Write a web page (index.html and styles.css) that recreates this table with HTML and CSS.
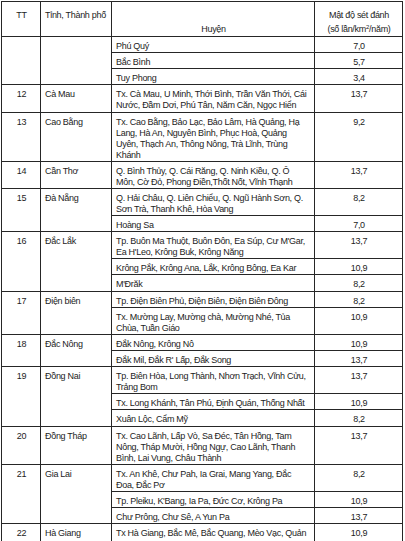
FILE: index.html
```html
<!DOCTYPE html>
<html lang="vi">
<head>
<meta charset="utf-8">
<title>Mật độ sét đánh</title>
<link rel="stylesheet" href="styles.css">
</head>
<body>
<table class="density">
  <colgroup>
    <col class="c-tt">
    <col class="c-prov">
    <col class="c-dist">
    <col class="c-val">
  </colgroup>
  <thead>
    <tr>
      <th class="h-tt">TT</th>
      <th class="h-prov">Tỉnh, Thành phố</th>
      <th class="h-dist">Huyện</th>
      <th class="h-val">Mật độ sét đánh<br>(số lần/km<sup>2</sup>/năm)</th>
    </tr>
  </thead>
  <tbody>
    <tr><td class="tt" rowspan="3"></td><td class="prov" rowspan="3"></td><td class="dist">Phú Quý</td><td class="val">7,0</td></tr>
    <tr><td class="dist">Bắc Bình</td><td class="val">5,7</td></tr>
    <tr><td class="dist">Tuy Phong</td><td class="val">3,4</td></tr>

    <tr><td class="tt">12</td><td class="prov">Cà Mau</td><td class="dist">Tx. Cà Mau, U Minh, Thới Bình, Trần Văn Thới, Cái<br>Nước, Đầm Dơi, Phú Tân, Năm Căn, Ngọc Hiển</td><td class="val">13,7</td></tr>

    <tr><td class="tt">13</td><td class="prov">Cao Bằng</td><td class="dist">Tx. Cao Bằng, Bảo Lạc, Bảo Lâm, Hà Quảng, Hạ<br>Lang, Hà An, Nguyên Bình, Phục Hoà, Quảng<br>Uyên, Thạch An, Thông Nông, Trà Lĩnh, Trùng<br>Khánh</td><td class="val">9,2</td></tr>

    <tr><td class="tt">14</td><td class="prov">Cần Thơ</td><td class="dist">Q. Bình Thủy, Q. Cái Răng, Q. Ninh Kiều, Q. Ô<br>Môn, Cờ Đỏ, Phong Điền,Thốt Nốt, Vĩnh Thạnh</td><td class="val">13,7</td></tr>

    <tr><td class="tt" rowspan="2">15</td><td class="prov" rowspan="2">Đà Nẵng</td><td class="dist">Q. Hải Châu, Q. Liên Chiểu, Q. Ngũ Hành Sơn, Q.<br>Sơn Trà, Thanh Khê, Hòa Vang</td><td class="val">8,2</td></tr>
    <tr><td class="dist">Hoàng Sa</td><td class="val">7,0</td></tr>

    <tr><td class="tt" rowspan="3">16</td><td class="prov" rowspan="3">Đắc Lắk</td><td class="dist">Tp. Buôn Ma Thuột, Buôn Đôn, Ea Súp, Cư M'Gar,<br>Ea H'Leo, Krông Buk, Krông Năng</td><td class="val">13,7</td></tr>
    <tr><td class="dist">Krông Pắk, Krông Ana, Lắk, Krông Bông, Ea Kar</td><td class="val">10,9</td></tr>
    <tr><td class="dist">M'Đrăk</td><td class="val">8,2</td></tr>

    <tr><td class="tt" rowspan="2">17</td><td class="prov" rowspan="2">Điện biên</td><td class="dist">Tp. Điện Biên Phủ, Điện Biên, Điện Biên Đông</td><td class="val">8,2</td></tr>
    <tr><td class="dist">Tx. Mường Lay, Mường chà, Mường Nhé, Tủa<br>Chùa, Tuần Giáo</td><td class="val">10,9</td></tr>

    <tr><td class="tt" rowspan="2">18</td><td class="prov" rowspan="2">Đắc Nông</td><td class="dist">Đắk Nông, Krông Nô</td><td class="val">10,9</td></tr>
    <tr><td class="dist">Đắk Mil, Đắk R' Lấp, Đắk Song</td><td class="val">13,7</td></tr>

    <tr><td class="tt" rowspan="3">19</td><td class="prov" rowspan="3">Đồng Nai</td><td class="dist">Tp. Biên Hòa, Long Thành, Nhơn Trạch, Vĩnh Cửu,<br>Trảng Bom</td><td class="val">13,7</td></tr>
    <tr><td class="dist">Tx. Long Khánh, Tân Phú, Định Quán, Thống Nhất</td><td class="val">10,9</td></tr>
    <tr><td class="dist">Xuân Lộc, Cẩm Mỹ</td><td class="val">8,2</td></tr>

    <tr><td class="tt">20</td><td class="prov">Đồng Tháp</td><td class="dist">Tx. Cao Lãnh, Lấp Vò, Sa Đéc, Tân Hồng, Tam<br>Nông, Tháp Mười, Hồng Ngự, Cao Lãnh, Thanh<br>Bình, Lai Vung, Châu Thành</td><td class="val">13,7</td></tr>

    <tr><td class="tt" rowspan="3">21</td><td class="prov" rowspan="3">Gia Lai</td><td class="dist">Tx. An Khê, Chư Pah, Ia Grai, Mang Yang, Đắc<br>Đoa, Đắc Pơ</td><td class="val">8,2</td></tr>
    <tr><td class="dist">Tp. Pleiku, K'Bang, Ia Pa, Đức Cơ, Krông Pa</td><td class="val">10,9</td></tr>
    <tr><td class="dist">Chư Prông, Chư Sê, A Yun Pa</td><td class="val">13,7</td></tr>

    <tr class="last"><td class="tt">22</td><td class="prov">Hà Giang</td><td class="dist">Tx Hà Giang, Bắc Mê, Bắc Quang, Mèo Vạc, Quản</td><td class="val">10,9</td></tr>
  </tbody>
</table>
</body>
</html>
```
FILE: styles.css
```css
html, body {
  margin: 0;
  padding: 0;
  background: #fff;
}

body {
  padding: 1px 0 0 1px;
  font-family: "Liberation Sans", Arial, sans-serif;
  font-size: 9px;
  color: #1c1c1c;
  letter-spacing: -0.3px;
}

.density {
  border-collapse: collapse;
  table-layout: fixed;
  width: 401px;
}

.c-tt { width: 39px; }
.c-prov { width: 71px; }
.c-dist { width: 203px; }
.c-val { width: 88px; }

.density th,
.density td {
  border: 1px solid #262626;
  font-weight: normal;
  line-height: 11px;
  padding: 4px 3px 0.15px 4px;
  vertical-align: top;
  white-space: nowrap;
  overflow: hidden;
}

.density thead th {
  line-height: 14px;
  padding-top: 6px;
  padding-bottom: 0;
  height: 27px;
}

.h-tt { text-align: center; }
.h-prov { text-align: left; }
.h-dist { text-align: center; vertical-align: bottom !important; }
.h-val { text-align: center; }

.h-val sup {
  font-size: 6px;
  line-height: 0;
  vertical-align: 3px;
}

.tt { text-align: center; }
.prov { text-align: left; }
.dist { text-align: left; }
.val { text-align: center; }

.density .last td {
  padding-bottom: 14px;
}
```
